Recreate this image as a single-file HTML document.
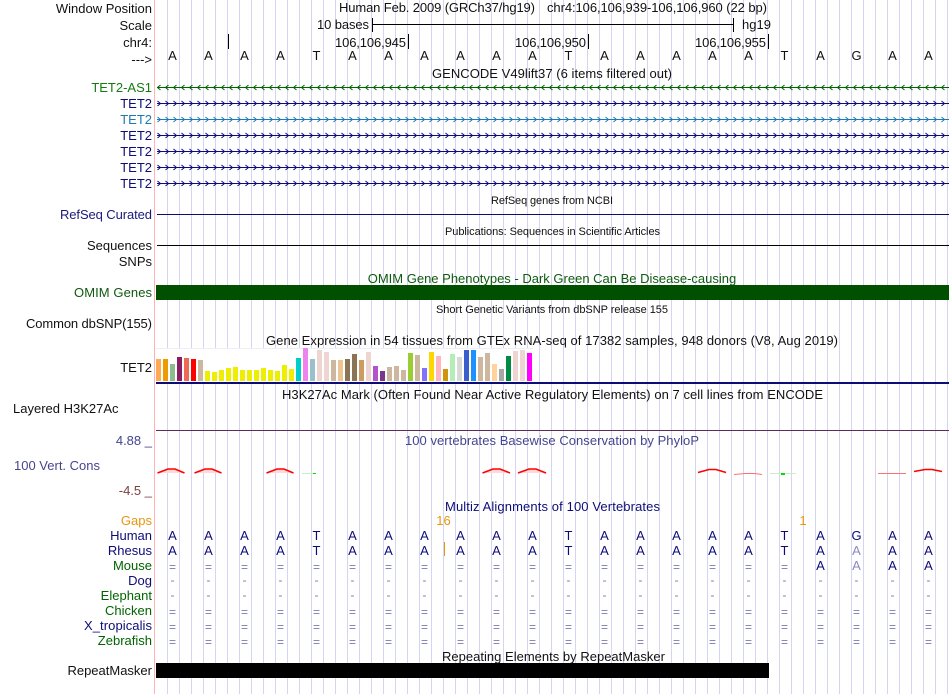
<!DOCTYPE html>
<html>
<head>
<meta charset="utf-8">
<style>
html,body{margin:0;padding:0;background:#fff;width:950px;height:694px;overflow:hidden}
svg{display:block}
text{font-family:"Liberation Sans",sans-serif;font-size:13px}
.e{text-anchor:end}
.m{text-anchor:middle}
.s{font-size:11px}
.d{font-size:12px}
</style>
</head>
<body>
<svg width="950" height="694" viewBox="0 0 950 694" xmlns="http://www.w3.org/2000/svg">
<defs>
<pattern id="grid" x="167" y="0" width="12" height="694" patternUnits="userSpaceOnUse"><rect x="0" y="0" width="1" height="694" fill="#d5d5f0"/></pattern>
<pattern id="al" width="8" height="7" patternUnits="userSpaceOnUse"><path d="M3.5 1L0.5 3.5L3.5 6" fill="none" stroke="#006400" stroke-width="1"/></pattern>
<pattern id="ar" width="8" height="7" patternUnits="userSpaceOnUse"><path d="M0.5 1L3.5 3.5L0.5 6" fill="none" stroke="#0c0c78" stroke-width="1"/></pattern>
<pattern id="ab" width="8" height="7" patternUnits="userSpaceOnUse"><path d="M0.5 1L3.5 3.5L0.5 6" fill="none" stroke="#1e78b4" stroke-width="1"/></pattern>
</defs>
<rect width="950" height="694" fill="#fff"/>
<rect x="156" y="0" width="794" height="694" fill="url(#grid)"/>
<rect x="154" y="0" width="1" height="694" fill="#ffb4b4"/>

<!-- header -->
<g fill="#111">
<text class="e" x="152" y="13">Window Position</text>
<text class="e" x="152" y="30">Scale</text>
<text class="e" x="152" y="47">chr4:</text>
<text class="e" x="152" y="64">---&gt;</text>
<text x="339" y="12" textLength="196">Human Feb. 2009 (GRCh37/hg19)</text>
<text x="547" y="12" textLength="220">chr4:106,106,939-106,106,960 (22 bp)</text>
<text x="317" y="29" textLength="52">10 bases</text>
<text x="742" y="29">hg19</text>
<text x="335" y="47" textLength="71">106,106,945</text>
<text x="515" y="47" textLength="71">106,106,950</text>
<text x="695" y="47" textLength="71">106,106,955</text>
<text class="m" y="60" x="172.5 208.5 244.5 280.5 316.5 352.5 388.5 424.5 460.5 496.5 532.5 568.5 604.5 640.5 676.5 712.5 748.5 784.5 820.5 856.5 892.5 928.5">AAAATAAAAAATAAAAATAGAA</text>
<text x="432" y="78" textLength="240">GENCODE V49lift37 (6 items filtered out)</text>
</g>
<g fill="#000">
<rect x="372" y="18" width="1" height="14"/>
<rect x="733" y="18" width="1" height="14"/>
<rect x="372" y="24" width="362" height="1"/>
<rect x="228" y="34" width="1" height="15"/>
<rect x="408" y="34" width="1" height="15"/>
<rect x="588" y="34" width="1" height="15"/>
<rect x="768" y="34" width="1" height="15"/>
</g>

<!-- genes -->
<text class="e" x="152" y="92" fill="#137a13">TET2-AS1</text>
<text class="e" x="152" y="108" fill="#0c0c78">TET2</text>
<text class="e" x="152" y="124" fill="#1e78b4">TET2</text>
<text class="e" x="152" y="140" fill="#0c0c78">TET2</text>
<text class="e" x="152" y="156" fill="#0c0c78">TET2</text>
<text class="e" x="152" y="172" fill="#0c0c78">TET2</text>
<text class="e" x="152" y="188" fill="#0c0c78">TET2</text>
<rect x="157" y="87" width="792" height="1" fill="#006400"/>
<g fill="#0c0c78">
<rect x="157" y="103" width="792" height="1"/>
<rect x="157" y="135" width="792" height="1"/>
<rect x="157" y="151" width="792" height="1"/>
<rect x="157" y="167" width="792" height="1"/>
<rect x="157" y="183" width="792" height="1"/>
</g>
<rect x="157" y="119" width="792" height="1" fill="#1e78b4"/>
<svg x="157" y="84" width="792" height="7"><rect width="792" height="7" fill="url(#al)"/></svg>
<svg x="157" y="100" width="792" height="7"><rect width="792" height="7" fill="url(#ar)"/></svg>
<svg x="157" y="116" width="792" height="7"><rect width="792" height="7" fill="url(#ab)"/></svg>
<svg x="157" y="132" width="792" height="7"><rect width="792" height="7" fill="url(#ar)"/></svg>
<svg x="157" y="148" width="792" height="7"><rect width="792" height="7" fill="url(#ar)"/></svg>
<svg x="157" y="164" width="792" height="7"><rect width="792" height="7" fill="url(#ar)"/></svg>
<svg x="157" y="180" width="792" height="7"><rect width="792" height="7" fill="url(#ar)"/></svg>

<!-- refseq etc -->
<text class="s" x="491" y="204" fill="#111" textLength="122">RefSeq genes from NCBI</text>
<text x="60" y="219" fill="#1a1a7a" textLength="92">RefSeq Curated</text>
<rect x="157" y="214" width="792" height="1" fill="#0c0c78"/>
<text class="s" x="445" y="235" fill="#111" textLength="215">Publications: Sequences in Scientific Articles</text>
<text class="e" x="152" y="250" fill="#111">Sequences</text>
<rect x="157" y="245" width="792" height="1" fill="#000"/>
<text class="e" x="152" y="266" fill="#111">SNPs</text>
<text class="m" x="552" y="283" fill="#0f5a0f">OMIM Gene Phenotypes - Dark Green Can Be Disease-causing</text>
<text x="74" y="297" fill="#0f5a0f" textLength="78">OMIM Genes</text>
<rect x="156" y="285" width="793" height="15" fill="#005000"/>
<text class="s" x="436" y="313" fill="#111" textLength="232">Short Genetic Variants from dbSNP release 155</text>
<text x="26" y="328" fill="#111" textLength="126">Common dbSNP(155)</text>

<!-- GTEx -->
<text x="266" y="345" fill="#111" textLength="572">Gene Expression in 54 tissues from GTEx RNA-seq of 17382 samples, 948 donors (V8, Aug 2019)</text>
<text class="e" x="152" y="372" fill="#111">TET2</text>
<rect x="155" y="348" width="378" height="34" fill="#fff"/>
<rect x="156" y="348" width="377" height="1" fill="#eeeef6"/>
<g>
<rect x="156" y="359" width="5" height="22" fill="#ffaa55"/>
<rect x="163" y="359" width="5" height="22" fill="#ee9a00"/>
<rect x="170" y="364" width="5" height="17" fill="#8fbc8f"/>
<rect x="177" y="357" width="5" height="24" fill="#8b1c62"/>
<rect x="184" y="358" width="5" height="23" fill="#ee6a50"/>
<rect x="191" y="359" width="5" height="22" fill="#ff0000"/>
<rect x="198" y="360" width="5" height="21" fill="#cdb79e"/>
<rect x="205" y="371" width="5" height="10" fill="#eeee00"/>
<rect x="212" y="372" width="5" height="9" fill="#eeee00"/>
<rect x="219" y="370" width="5" height="11" fill="#eeee00"/>
<rect x="226" y="368" width="5" height="13" fill="#eeee00"/>
<rect x="233" y="367" width="5" height="14" fill="#eeee00"/>
<rect x="240" y="370" width="5" height="11" fill="#eeee00"/>
<rect x="247" y="370" width="5" height="11" fill="#eeee00"/>
<rect x="254" y="370" width="5" height="11" fill="#eeee00"/>
<rect x="261" y="368" width="5" height="13" fill="#eeee00"/>
<rect x="268" y="370" width="5" height="11" fill="#eeee00"/>
<rect x="275" y="371" width="5" height="10" fill="#eeee00"/>
<rect x="282" y="365" width="5" height="16" fill="#eeee00"/>
<rect x="289" y="369" width="5" height="12" fill="#eeee00"/>
<rect x="296" y="358" width="5" height="23" fill="#00cdcd"/>
<rect x="303" y="348" width="5" height="33" fill="#ee82ee"/>
<rect x="310" y="359" width="5" height="22" fill="#9ac0cd"/>
<rect x="317" y="350" width="5" height="31" fill="#eed5d2"/>
<rect x="324" y="352" width="5" height="29" fill="#eed5d2"/>
<rect x="331" y="360" width="5" height="21" fill="#cdb79e"/>
<rect x="338" y="360" width="5" height="21" fill="#eec591"/>
<rect x="345" y="359" width="5" height="22" fill="#8b7355"/>
<rect x="352" y="354" width="5" height="27" fill="#8b7355"/>
<rect x="359" y="360" width="5" height="21" fill="#cd9b61"/>
<rect x="366" y="352" width="5" height="29" fill="#eed5d2"/>
<rect x="373" y="366" width="5" height="15" fill="#b452cd"/>
<rect x="380" y="371" width="5" height="10" fill="#7a378b"/>
<rect x="387" y="367" width="5" height="14" fill="#cdb79e"/>
<rect x="394" y="366" width="5" height="15" fill="#cdb79e"/>
<rect x="401" y="370" width="5" height="11" fill="#cdb79e"/>
<rect x="408" y="353" width="5" height="28" fill="#9acd32"/>
<rect x="415" y="355" width="5" height="26" fill="#cdb79e"/>
<rect x="422" y="368" width="5" height="13" fill="#8470ff"/>
<rect x="429" y="352" width="5" height="29" fill="#ffd700"/>
<rect x="436" y="356" width="5" height="25" fill="#ffb6c1"/>
<rect x="443" y="369" width="5" height="12" fill="#cd950c"/>
<rect x="450" y="354" width="5" height="27" fill="#b4eeb4"/>
<rect x="457" y="357" width="5" height="24" fill="#d9d9d9"/>
<rect x="464" y="350" width="5" height="31" fill="#3a5fcd"/>
<rect x="471" y="350" width="5" height="31" fill="#1e90ff"/>
<rect x="478" y="357" width="5" height="24" fill="#cdb79e"/>
<rect x="485" y="353" width="5" height="28" fill="#cdb79e"/>
<rect x="492" y="364" width="5" height="17" fill="#ffd39b"/>
<rect x="499" y="369" width="5" height="12" fill="#a6a6a6"/>
<rect x="506" y="356" width="5" height="25" fill="#008b45"/>
<rect x="513" y="351" width="5" height="30" fill="#eed5d2"/>
<rect x="520" y="350" width="5" height="31" fill="#eed5d2"/>
<rect x="527" y="353" width="5" height="28" fill="#ff00ff"/>
</g>
<rect x="156" y="382" width="793" height="2" fill="#0c0c78"/>

<!-- H3K27Ac -->
<text x="282" y="399" fill="#111" textLength="541">H3K27Ac Mark (Often Found Near Active Regulatory Elements) on 7 cell lines from ENCODE</text>
<text x="13" y="413" fill="#111">Layered H3K27Ac</text>
<rect x="156" y="430" width="793" height="1" fill="#5a2a5a"/>

<!-- Cons -->
<text x="405" y="445" fill="#45458f" textLength="294">100 vertebrates Basewise Conservation by PhyloP</text>
<text class="e" x="152" y="445" fill="#45458f" xml:space="preserve">4.88 _</text>
<text x="14" y="470" fill="#45458f">100 Vert. Cons</text>
<text class="e" x="152" y="495" fill="#7f3f3f" xml:space="preserve">-4.5 _</text>
<g fill="#ffd8d8" stroke="#ff0000" stroke-width="1.5">
<path d="M157.5 473L168 469H175L184.5 473Z" stroke="none"/>
<path d="M194.5 473L205 469H212L221.5 473Z" stroke="none"/>
<path d="M266.5 473L277 469H284L293.5 473Z" stroke="none"/>
<path d="M482.5 473L493 469H500L510 473Z" stroke="none"/>
<path d="M518 473L529 469H536L546 473Z" stroke="none"/>
</g>
<g fill="none" stroke="#ff0000" stroke-width="1.5">
<path d="M157.5 473L168 469H175L184.5 473"/>
<path d="M194.5 473L205 469H212L221.5 473"/>
<path d="M266.5 473L277 469H284L293.5 473"/>
<path d="M482.5 473L493 469H500L510 473"/>
<path d="M518 473L529 469H536L546 473"/>
<path d="M698 472.5L709 469.5H716L726 472.5"/>
<path d="M914 471.5L925 469.5H932L942 471.5"/>
</g>
<g fill="none" stroke="#ff7070" stroke-width="1">
<path d="M734 474.5L745 473.5H755L762 474.5"/>
<path d="M878 473.5H906"/>
</g>
<g>
<rect x="302" y="473" width="14" height="1" fill="#c8eec8"/>
<rect x="313" y="473" width="3" height="1" fill="#00e000"/>
<rect x="770" y="473" width="26" height="1" fill="#c8eec8"/>
<rect x="781" y="473" width="4" height="2" fill="#00e000"/>
</g>

<!-- Multiz -->
<text x="445" y="511" fill="#0c0c78" textLength="215">Multiz Alignments of 100 Vertebrates</text>
<text class="e" x="152" y="525" fill="#e8960f">Gaps</text>
<text class="m" x="443.5" y="525" fill="#e8960f">16</text>
<text class="m" x="803" y="525" fill="#e8960f">1</text>
<rect x="444" y="542" width="1" height="14" fill="#e8960f"/>
<g>
<text class="e" x="152" y="540" fill="#0c0c78">Human</text>
<text class="e" x="152" y="555" fill="#0c0c78">Rhesus</text>
<text class="e" x="152" y="570" fill="#006400">Mouse</text>
<text class="e" x="152" y="585" fill="#0c0c78">Dog</text>
<text class="e" x="152" y="600" fill="#006400">Elephant</text>
<text class="e" x="152" y="615" fill="#006400">Chicken</text>
<text x="84" y="630" fill="#0c0c78" textLength="68">X_tropicalis</text>
<text class="e" x="152" y="645" fill="#006400">Zebrafish</text>
</g>
<g fill="#0c0c78">
<text class="m" y="540" x="172.5 208.5 244.5 280.5 316.5 352.5 388.5 424.5 460.5 496.5 532.5 568.5 604.5 640.5 676.5 712.5 748.5 784.5 820.5 856.5 892.5 928.5">AAAATAAAAAATAAAAATAGAA</text>
<text class="m" y="555" x="172.5 208.5 244.5 280.5 316.5 352.5 388.5 424.5 460.5 496.5 532.5 568.5 604.5 640.5 676.5 712.5 748.5 784.5 820.5 892.5 928.5">AAAATAAAAAATAAAAATAAA</text>
<text class="m" y="570" x="820.5 892.5 928.5">AAA</text>
</g>
<g fill="#8a8abf">
<text class="m" y="555" x="856.5">A</text>
<text class="m" y="570" x="856.5">A</text>
</g>
<g fill="#7a7ab0">
<text class="m d" y="571" x="172.5 208.5 244.5 280.5 316.5 352.5 388.5 424.5 460.5 496.5 532.5 568.5 604.5 640.5 676.5 712.5 748.5 784.5">==================</text>
<text class="m d" y="616" x="172.5 208.5 244.5 280.5 316.5 352.5 388.5 424.5 460.5 496.5 532.5 568.5 604.5 640.5 676.5 712.5 748.5 784.5 820.5 856.5 892.5 928.5">======================</text>
<text class="m d" y="631" x="172.5 208.5 244.5 280.5 316.5 352.5 388.5 424.5 460.5 496.5 532.5 568.5 604.5 640.5 676.5 712.5 748.5 784.5 820.5 856.5 892.5 928.5">======================</text>
<text class="m d" y="646" x="172.5 208.5 244.5 280.5 316.5 352.5 388.5 424.5 460.5 496.5 532.5 568.5 604.5 640.5 676.5 712.5 748.5 784.5 820.5 856.5 892.5 928.5">======================</text>
<text class="m d" y="584" x="172.5 208.5 244.5 280.5 316.5 352.5 388.5 424.5 460.5 496.5 532.5 568.5 604.5 640.5 676.5 712.5 748.5 784.5 820.5 856.5 892.5 928.5">----------------------</text>
<text class="m d" y="599" x="172.5 208.5 244.5 280.5 316.5 352.5 388.5 424.5 460.5 496.5 532.5 568.5 604.5 640.5 676.5 712.5 748.5 784.5 820.5 856.5 892.5 928.5">----------------------</text>
</g>

<!-- RepeatMasker -->
<rect x="156" y="663" width="613" height="15" fill="#000"/>
<text x="442" y="661" fill="#111" textLength="223">Repeating Elements by RepeatMasker</text>
<text class="e" x="152" y="675" fill="#111">RepeatMasker</text>
</svg>
</body>
</html>
